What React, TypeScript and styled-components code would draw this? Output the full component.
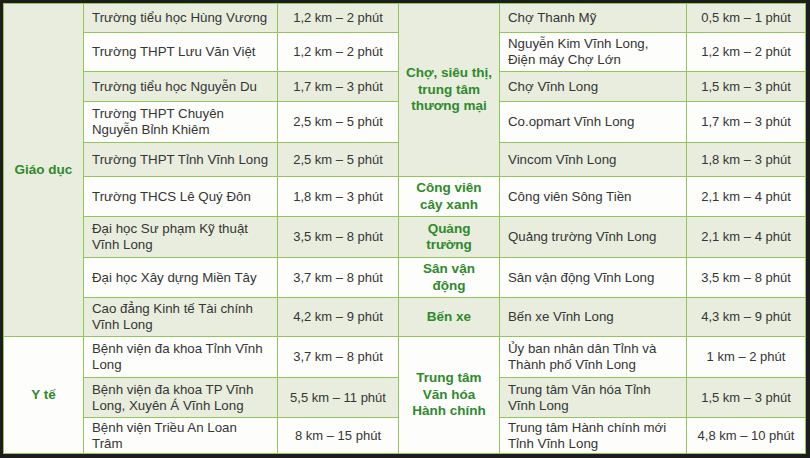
import React from "react";
import styled, { createGlobalStyle } from "styled-components";

const Global = createGlobalStyle`
  html, body { margin: 0; padding: 0; background: #1d1d1d; }
  body { width: 810px; height: 458px; overflow: hidden; }
`;

const Frame = styled.div`
  width: 810px;
  height: 458px;
  box-sizing: border-box;
  padding: 3px 5px 5px 3px;
  background: #1d1d1d;
`;

const Table = styled.table`
  width: 802px;
  height: 450px;
  border-collapse: collapse;
  table-layout: fixed;
  font-family: "Liberation Sans", Arial, sans-serif;
  font-size: 13px;
  color: #353535;
`;

const Col = styled.col<{ $w: number }>`
  width: ${(p) => p.$w}px;
`;

const Row = styled.tr<{ $h: number; $alt: boolean }>`
  height: ${(p) => p.$h}px;
  background: ${(p) => (p.$alt ? "#e8eddd" : "#fdfefb")};
`;

const NameCell = styled.td`
  border: 1px solid #93c65a;
  padding: 0 6px 0 8px;
  line-height: 16px;
  font-size: 13.3px;
  vertical-align: middle;
  text-align: left;
  white-space: nowrap;
`;

const DistCell = styled.td`
  border: 1px solid #93c65a;
  padding: 0 4px;
  line-height: 16px;
  vertical-align: middle;
  text-align: center;
  white-space: nowrap;
`;

const CatCell = styled.td<{ $alt: boolean }>`
  border: 1px solid #93c65a;
  padding: 0 4px;
  text-align: center;
  vertical-align: middle;
  font-weight: bold;
  font-size: 13.5px;
  color: #2f8a2c;
  line-height: 16.5px;
  background: ${(p) => (p.$alt ? "#e8eddd" : "#fdfefb")};
`;

type Group = { text: string[]; span: number; alt: boolean };
type R = {
  h: number;
  left?: Group;
  name: string[];
  dist: string;
  mid?: Group;
  name2: string[];
  dist2: string;
};

const rows: R[] = [
  { h: 29, left: { text: ["Giáo dục"], span: 9, alt: true }, name: ["Trường tiểu học Hùng Vương"], dist: "1,2 km – 2 phút", mid: { text: ["Chợ, siêu thị,", "trung tâm", "thương mại"], span: 5, alt: true }, name2: ["Chợ Thanh Mỹ"], dist2: "0,5 km – 1 phút" },
  { h: 39, name: ["Trường THPT Lưu Văn Việt"], dist: "1,2 km – 2 phút", name2: ["Nguyễn Kim Vĩnh Long,", "Điện máy Chợ Lớn"], dist2: "1,2 km – 2 phút" },
  { h: 30, name: ["Trường tiểu học Nguyễn Du"], dist: "1,7 km – 3 phút", name2: ["Chợ Vĩnh Long"], dist2: "1,5 km – 3 phút" },
  { h: 41, name: ["Trường THPT Chuyên", "Nguyễn Bỉnh Khiêm"], dist: "2,5 km – 5 phút", name2: ["Co.opmart Vĩnh Long"], dist2: "1,7 km – 3 phút" },
  { h: 34, name: ["Trường THPT Tỉnh Vĩnh Long"], dist: "2,5 km – 5 phút", name2: ["Vincom Vĩnh Long"], dist2: "1,8 km – 3 phút" },
  { h: 40, name: ["Trường THCS Lê Quý Đôn"], dist: "1,8 km – 3 phút", mid: { text: ["Công viên", "cây xanh"], span: 1, alt: false }, name2: ["Công viên Sông Tiền"], dist2: "2,1 km – 4 phút" },
  { h: 41, name: ["Đại học Sư phạm Kỹ thuật", "Vĩnh Long"], dist: "3,5 km – 8 phút", mid: { text: ["Quảng", "trường"], span: 1, alt: true }, name2: ["Quảng trường Vĩnh Long"], dist2: "2,1 km – 4 phút" },
  { h: 40, name: ["Đại học Xây dựng Miền Tây"], dist: "3,7 km – 8 phút", mid: { text: ["Sân vận", "động"], span: 1, alt: false }, name2: ["Sân vận động Vĩnh Long"], dist2: "3,5 km – 8 phút" },
  { h: 39, name: ["Cao đẳng Kinh tế Tài chính", "Vĩnh Long"], dist: "4,2 km – 9 phút", mid: { text: ["Bến xe"], span: 1, alt: true }, name2: ["Bến xe Vĩnh Long"], dist2: "4,3 km – 9 phút" },
  { h: 41, left: { text: ["Y tế"], span: 3, alt: false }, name: ["Bệnh viện đa khoa Tỉnh Vĩnh", "Long"], dist: "3,7 km – 8 phút", mid: { text: ["Trung tâm", "Văn hóa", "Hành chính"], span: 3, alt: false }, name2: ["Ủy ban nhân dân Tỉnh và", "Thành phố Vĩnh Long"], dist2: "1 km – 2 phút" },
  { h: 40, name: ["Bệnh viện đa khoa TP Vĩnh", "Long, Xuyên Á Vĩnh Long"], dist: "5,5 km – 11 phút", name2: ["Trung tâm Văn hóa Tỉnh", "Vĩnh Long"], dist2: "1,5 km – 3 phút" },
  { h: 36, name: ["Bệnh viện Triều An Loan", "Trâm"], dist: "8 km – 15 phút", name2: ["Trung tâm Hành chính mới", "Tỉnh Vĩnh Long"], dist2: "4,8 km – 10 phút" },
];

const colWidths = [80, 194, 121, 101, 187, 119];

const Lines = ({ t }: { t: string[] }) => (
  <>
    {t.map((s, i) => (
      <React.Fragment key={i}>
        {i > 0 && <br />}
        {s}
      </React.Fragment>
    ))}
  </>
);

export default function App() {
  return (
    <Frame>
      <Global />
      <Table>
        <colgroup>
          {colWidths.map((w, i) => (
            <Col key={i} $w={w} />
          ))}
        </colgroup>
        <tbody>
          {rows.map((r, i) => (
            <Row key={i} $h={r.h} $alt={i % 2 === 0}>
              {r.left && (
                <CatCell rowSpan={r.left.span} $alt={r.left.alt}>
                  <Lines t={r.left.text} />
                </CatCell>
              )}
              <NameCell>
                <Lines t={r.name} />
              </NameCell>
              <DistCell>{r.dist}</DistCell>
              {r.mid && (
                <CatCell rowSpan={r.mid.span} $alt={r.mid.alt}>
                  <Lines t={r.mid.text} />
                </CatCell>
              )}
              <NameCell>
                <Lines t={r.name2} />
              </NameCell>
              <DistCell>{r.dist2}</DistCell>
            </Row>
          ))}
        </tbody>
      </Table>
    </Frame>
  );
}
